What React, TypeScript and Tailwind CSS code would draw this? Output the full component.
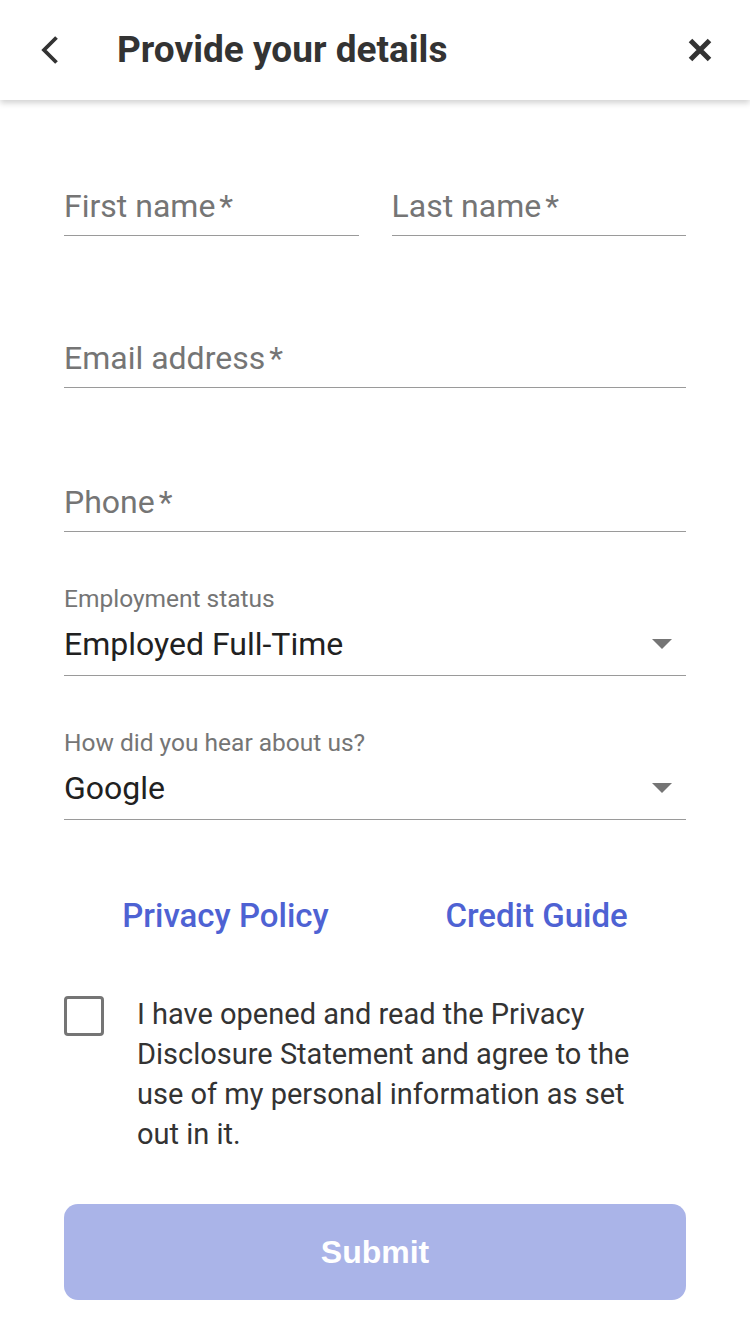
import React from 'react';

const font = { fontFamily: 'Roboto, "Noto Sans", sans-serif' };

function TextField({ label, className = '' }: { label: string; className?: string }) {
  return (
    <div className={`border-b border-[#9a9a9a] pb-[11px] ${className}`}>
      <div className="text-[32px] leading-[36px] text-[#757575]">
        {label}
        <span className="ml-[4px]">*</span>
      </div>
    </div>
  );
}

function SelectField({ label, value, className = '' }: { label: string; value: string; className?: string }) {
  return (
    <div className={className}>
      <div className="text-[24.5px] leading-[24px] text-[#757575]">{label}</div>
      <div className="mt-[15px] flex items-center justify-between border-b border-[#9a9a9a] pb-[13px]">
        <span className="text-[32px] leading-[36px] text-[#212121]">{value}</span>
        <svg width="20" height="10" viewBox="0 0 20 10" className="mr-[14px]">
          <path d="M0 0 L20 0 L10 10 Z" fill="#757575" />
        </svg>
      </div>
    </div>
  );
}

export default function App() {
  return (
    <div className="min-h-[1334px] w-[750px] bg-white" style={font}>
      {/* Header */}
      <header className="relative z-10 flex h-[100px] items-center bg-white px-[40px] shadow-[0_3px_6px_rgba(0,0,0,0.18)]">
        <svg width="20" height="28" viewBox="0 0 20 28" className="shrink-0">
          <path d="M16.5 1.5 L4 14 L16.5 26.5" fill="none" stroke="#333" strokeWidth="3.8" strokeLinecap="butt" strokeLinejoin="miter" />
        </svg>
        <h1 className="ml-[57px] flex-1 text-[37px] font-bold leading-[40px] text-[#333]">Provide your details</h1>
        <svg width="24" height="24" viewBox="0 0 24 24" className="mr-[-2px] shrink-0">
          <path d="M2.5 2.5 L21.5 21.5 M21.5 2.5 L2.5 21.5" fill="none" stroke="#333" strokeWidth="5" strokeLinecap="butt" />
        </svg>
      </header>

      <main className="px-[64px]">
        <div className="mt-[88px] flex gap-[33px]">
          <TextField label="First name" className="flex-1" />
          <TextField label="Last name" className="flex-1" />
        </div>

        <TextField label="Email address" className="mt-[104px]" />
        <TextField label="Phone" className="mt-[96px]" />

        <SelectField label="Employment status" value="Employed Full-Time" className="mt-[55px]" />
        <SelectField label="How did you hear about us?" value="Google" className="mt-[55px]" />

        <div className="mt-[78px] flex justify-around text-[33px] font-medium leading-[36px] text-[#4e62d3]">
          <a>Privacy Policy</a>
          <a>Credit Guide</a>
        </div>

        <label className="mt-[60px] flex items-start gap-[33px]">
          <span className="mt-[2px] block h-[40px] w-[40px] shrink-0 rounded-[4px] border-[3px] border-[#757575]" />
          <span className="pr-[20px] text-[29px] leading-[40px] text-[#333]">
            I have opened and read the Privacy Disclosure Statement and agree to the use of my personal information as set out in it.
          </span>
        </label>

        <button
          className="mt-[50px] flex h-[96px] w-full items-center justify-center rounded-[14px] bg-[#aab4e8] text-[32px] font-bold text-white"
          style={{ fontFamily: '"Liberation Sans", Arial, sans-serif' }}
        >
          Submit
        </button>
      </main>
    </div>
  );
}
